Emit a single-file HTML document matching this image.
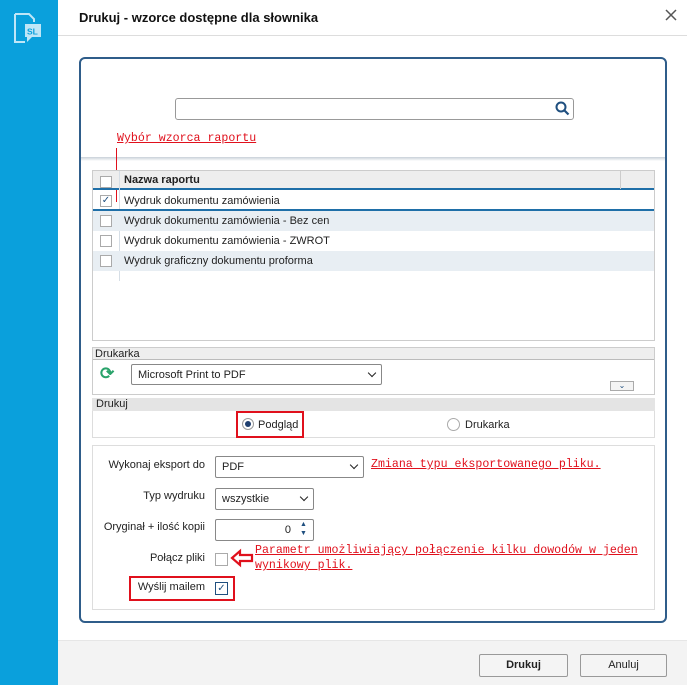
<!DOCTYPE html><html><head><meta charset="utf-8"><style>
*{box-sizing:border-box;margin:0;padding:0}
body{width:687px;height:685px;position:relative;font-family:"Liberation Sans",sans-serif;font-size:11px;color:#222;background:#fff;overflow:hidden}
.a{position:absolute;white-space:nowrap}
.cb{position:absolute;width:12px;height:12px;border:1px solid #aaa;background:#fff}
.red{color:#e0101c;font-family:"Liberation Mono",monospace;font-size:11.6px;text-decoration:underline}
.sel{position:absolute;border:1px solid #888;border-radius:2px;background:#fff;padding:4px 6px;font-size:11px}
.sel:after{content:"";position:absolute;right:6px;top:5px;width:5px;height:5px;border-right:1.5px solid #222;border-bottom:1.5px solid #222;transform:rotate(45deg)}
.btn{position:absolute;border:1px solid #999;border-radius:2px;background:#f4f4f4;text-align:center;line-height:21px}
.lbl{position:absolute;right:482px;white-space:nowrap}
</style></head><body>
<div class="a" style="left:0;top:0;width:58px;height:685px;background:#0aa0dc"></div>
<svg class="a" style="left:13px;top:12px" width="32" height="32" viewBox="0 0 32 32"><path d="M2 2h14l5 5v3M2 2v28h10" fill="none" stroke="#bfe6f7" stroke-width="2"/><rect x="12" y="12" width="16" height="13" fill="#bfe6f7"/><path d="M14 25v5l5-5" fill="#bfe6f7"/><text x="14" y="22.5" font-size="8.5" font-weight="bold" fill="#0aa0dc" font-family="Liberation Sans">SL</text></svg>
<div class="a" style="left:58px;top:0;width:629px;height:36px;border-bottom:1px solid #ddd;background:#fff"></div>
<div class="a" style="left:79px;top:10px;font-size:13px;font-weight:bold;color:#111">Drukuj - wzorce dostępne dla słownika</div>
<svg class="a" style="left:665px;top:9px" width="12" height="12"><path d="M1 1l10 10M11 1L1 11" stroke="#555" stroke-width="1.5"/></svg>
<div class="a" style="left:58px;top:640px;width:629px;height:45px;background:#f3f3f3;border-top:1px solid #e6e6e6"></div>
<div class="a" style="left:79px;top:57px;width:588px;height:566px;border:2px solid #2f5d8a;border-radius:6px;background:#fff"></div>
<div class="a" style="left:81px;top:157px;width:584px;height:4px;background:linear-gradient(#c8d0d8,#fff)"></div>
<div class="a" style="left:175px;top:98px;width:399px;height:22px;border:1px solid #999;border-radius:3px"></div>
<svg class="a" style="left:555px;top:101px" width="15" height="15" viewBox="0 0 15 15"><circle cx="6" cy="6" r="4.5" fill="none" stroke="#1f4f7f" stroke-width="2"/><path d="M9.5 9.5l4 4" stroke="#1f4f7f" stroke-width="2.2"/></svg>
<div class="a red" style="left:117px;top:132px">Wybór wzorca raportu</div>
<div class="a" style="left:116px;top:148px;width:1px;height:54px;background:#e0101c"></div>
<div class="a" style="left:92px;top:170px;width:563px;height:171px;border:1px solid #ccc"></div>
<div class="a" style="left:93px;top:171px;width:561px;height:19px;background:#eee;border-bottom:2px solid #1f6fa8"></div>
<div class="a" style="left:119px;top:171px;width:1px;height:110px;background:#d6dee6"></div>
<div class="a" style="left:620px;top:171px;width:1px;height:18px;background:#ccc"></div>
<div class="cb" style="left:100px;top:176px"></div>
<div class="a" style="left:124px;top:174px;font-weight:bold">Nazwa raportu</div>
<div class="a" style="left:93px;top:209px;width:561px;height:2px;background:#1f6fa8"></div>
<div class="a" style="left:93px;top:211px;width:561px;height:20px;background:#e8eef3"></div>
<div class="a" style="left:93px;top:251px;width:561px;height:20px;background:#e8eef3"></div>
<div class="cb" style="left:100px;top:195px;font-size:10px;line-height:10px;text-align:center;color:#1f4f7f">✓</div>
<div class="a" style="left:124px;top:195px">Wydruk dokumentu zamówienia</div>
<div class="cb" style="left:100px;top:215px"></div><div class="a" style="left:124px;top:215px">Wydruk dokumentu zamówienia - Bez cen</div>
<div class="cb" style="left:100px;top:235px"></div><div class="a" style="left:124px;top:235px">Wydruk dokumentu zamówienia - ZWROT</div>
<div class="cb" style="left:100px;top:255px"></div><div class="a" style="left:124px;top:255px">Wydruk graficzny dokumentu proforma</div>
<div class="a" style="left:92px;top:347px;width:563px;height:48px;border:1px solid #ccc"></div>
<div class="a" style="left:93px;top:348px;width:561px;height:12px;background:#eee;border-bottom:1px solid #bbb;padding-left:2px;line-height:12px">Drukarka</div>
<div class="a" style="left:100px;top:364px;font-size:17px;color:#2aa36b;font-weight:bold">⟳</div>
<div class="sel" style="left:131px;top:364px;width:251px;height:21px">Microsoft Print to PDF</div>
<div class="a" style="left:610px;top:381px;width:24px;height:10px;border:1px solid #aaa;background:#f4f4f4;font-size:8px;text-align:center;line-height:8px;color:#1f4f7f">⌄</div>
<div class="a" style="left:92px;top:398px;width:563px;height:40px;border:1px solid #ddd"></div>
<div class="a" style="left:92px;top:398px;width:563px;height:13px;background:#e4e4e4;padding-left:4px;line-height:13px">Drukuj</div>
<div class="a" style="left:236px;top:411px;width:68px;height:27px;border:2px solid #e0101c"></div>
<div class="a" style="left:242px;top:418px;width:12px;height:12px;border:1px solid #999;border-radius:50%"><div style="margin:2px;width:6px;height:6px;border-radius:50%;background:#1f3f6f"></div></div>
<div class="a" style="left:258px;top:419px">Podgląd</div>
<div class="a" style="left:447px;top:418px;width:13px;height:13px;border:1px solid #aaa;border-radius:50%"></div>
<div class="a" style="left:465px;top:419px">Drukarka</div>
<div class="a" style="left:92px;top:445px;width:563px;height:165px;border:1px solid #ddd"></div>
<div class="lbl" style="top:459px">Wykonaj eksport do</div>
<div class="sel" style="left:215px;top:456px;width:149px;height:22px">PDF</div>
<div class="a red" style="left:371px;top:458px">Zmiana typu eksportowanego pliku.</div>
<div class="lbl" style="top:490px">Typ wydruku</div>
<div class="sel" style="left:215px;top:488px;width:99px;height:22px">wszystkie</div>
<div class="lbl" style="top:521px">Oryginał + ilość kopii</div>
<div class="a" style="left:215px;top:519px;width:99px;height:22px;border:1px solid #888;border-radius:2px;text-align:right;padding:4px 22px 0 0">0</div>
<div class="a" style="left:300px;top:520px;font-size:7px;line-height:9px;color:#1f4f7f">▲<br>▼</div>
<div class="lbl" style="top:552px">Połącz pliki</div>
<div class="cb" style="left:215px;top:553px;width:13px;height:13px"></div>
<svg class="a" style="left:230px;top:548px" width="24" height="20"><path d="M2 10l8-7v4h12v6h-12v4z" fill="#fff" stroke="#e0101c" stroke-width="2.2"/></svg>
<div class="a red" style="left:255px;top:543px;line-height:15px">Parametr umożliwiający połączenie kilku dowodów w jeden<br>wynikowy plik.</div>
<div class="a" style="left:129px;top:576px;width:106px;height:25px;border:2px solid #e0101c"></div>
<div class="lbl" style="top:581px">Wyślij mailem</div>
<div class="cb" style="left:215px;top:582px;width:13px;height:13px;border-color:#1f4f7f;font-size:10px;line-height:11px;text-align:center;color:#1f4f7f">✓</div>
<div class="btn" style="left:479px;top:654px;width:89px;height:23px;font-weight:bold">Drukuj</div>
<div class="btn" style="left:580px;top:654px;width:87px;height:23px">Anuluj</div>
</body></html>
